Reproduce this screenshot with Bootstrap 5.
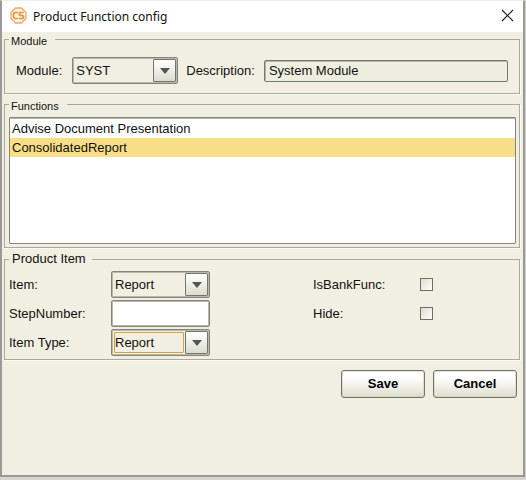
<!DOCTYPE html>
<html lang="en">
<head>
<meta charset="utf-8">
<meta name="viewport" content="width=device-width, initial-scale=1">
<title>Product Function config</title>
<link href="https://cdn.jsdelivr.net/npm/bootstrap@5.3.0/dist/css/bootstrap.min.css" rel="stylesheet">
<style>
  body { font: 13px/19px "Liberation Sans", Arial, sans-serif; color: #111; background: #d4d4d2; }
  .dialog { min-height: calc(100vh - 3px); margin-right: 1px; background: #f1efe2; border: 2px solid #999a96; border-top: 1px solid #eee; }
  .title-bar { height: 31px; background: #fff; padding: 0 9px 0 8px; font: 12px/28px "Noto Sans", sans-serif; }
  .title-bar h1 { font: inherit; margin: 0 0 0 6px; }
  .close-x { width: 13px; height: 13px; margin-bottom: 2px; }
  .close-x svg, .app-icon { display: block; }
  .app-icon { margin-bottom: 2px; }
  .panel { margin: 0 3px 3px 2px; border: 1px solid #aaa99d; box-shadow: 1px 1px 0 #fbfaf3; }
  .panel legend { float: none; width: auto; margin: 0 0 0 4px; padding: 3px 8px 0 2px; font-size: 11px; line-height: 12px; background: #f1efe2; }
  .panel .legend-large { font-size: 13px; line-height: 16px; padding: 0 6px 0 3px; }
  .module-row { padding: 10px 11px 9px 11px; }
  .module-row .combo { width: 106px; margin-left: 10px; }
  .field { height: 27px; border: 1px solid #85857a; border-radius: 2px; background: #fff; padding: 0 3px; color: #111; box-shadow: inset 0 0 0 1px #b9b8aa; }
  .field-desc { height: 22px; border-color: #77776a; background: #eeeee0; margin-left: 9px; padding-left: 4px; min-width: 0; box-shadow: inset 1px 1px 0 #b5b5a8; }
  .combo { position: relative; }
  .combo select { display: block; appearance: none; width: 100%; background: #f1efe2; }
  .combo::after { content: ""; position: absolute; top: 2px; right: 2px; bottom: 2px; width: 23px; border: 1px solid #75756b; border-radius: 1px; background: linear-gradient(#fff, #dddcd0); pointer-events: none; }
  .combo svg { position: absolute; z-index: 1; right: 8px; top: 11px; pointer-events: none; }
  .combo-focus::before { content: ""; position: absolute; top: 3px; left: 3px; right: 26px; bottom: 3px; border: 1px solid #d0a53c; border-radius: 1px; pointer-events: none; }
  .fn-list { height: 127px; margin: 5px 3px 3px 4px; border: 1px solid #85857a; background: #fff; border-radius: 1px; overflow: auto; box-shadow: inset 0 1px 0 #b9b8aa; }
  .fn-list .list-group-item { border: 0; padding: 0 2px; line-height: 19px; color: #111; background: none; }
  .fn-list .list-group-item:first-child { margin-top: 1px; }
  .fn-list .list-group-item.active { margin-top: 0; background: #f8df87; }
  .item-grid { display: grid; grid-template-columns: 102px 99px 103px 107px 1fr; gap: 2px 0; align-items: center; padding: 4px 4px 3px; }
  .item-grid .label-b { grid-column: 4; }
  .item-grid .label-a { grid-column: 1; }
  .check { appearance: none; width: 13px; height: 13px; border: 1px solid #6f6f63; background: linear-gradient(135deg, #dedcd0, #fff); margin: 0; }
  .actions { padding: 7px 6px 0 0; }
  .push { width: 84px; height: 28px; padding: 0; border: 1px solid #73736a; border-radius: 3px; background: linear-gradient(#fff 25%, #deddcf); font: bold 13px/20px "Liberation Sans", Arial, sans-serif; color: #000; box-shadow: inset 0 0 0 1px #c8c7ba80; }
</style>
<script src="https://cdn.jsdelivr.net/npm/bootstrap@5.3.0/dist/js/bootstrap.bundle.min.js"></script>
</head>
<body>
<main class="dialog">
  <header class="title-bar d-flex align-items-center">
    <svg class="app-icon flex-shrink-0" width="17" height="17" viewBox="0 0 17 17" fill="none" stroke="#eba869">
      <path d="M5.500 1h6L16 5.500v6L11.500 16h-6L1 11.500v-6z" fill="#fff3e4" stroke-width="1.300"/>
      <path d="M8 5.500H4.800L3.500 6.800v3.400L4.800 11.500H8M13.700 5.500h-3.500l-.9.900v1.300l.8.800h2.500l.9.800v1.400l-.8.800H9" stroke="#e39245" stroke-width="1.700"/>
    </svg>
    <h1 class="flex-grow-1">Product Function config</h1>
    <button type="button" class="close-x border-0 bg-transparent p-0" aria-label="Close">
      <svg width="13" height="13" viewBox="0 0 13 13" stroke="#222" stroke-width="1.200"><path d="M1 1l11 11M12 1L1 12"/></svg>
    </button>
  </header>
  <form>
    <fieldset class="panel">
      <legend>Module</legend>
      <div class="module-row d-flex align-items-center">
        <label for="module">Module:</label>
        <div class="combo flex-shrink-0">
          <select id="module" class="field"><option>SYST</option></select>
          <svg width="10" height="6" viewBox="0 0 10 6"><path d="M0 0h10L5 6z" fill="#55554f"/></svg>
        </div>
        <label for="desc" class="ms-2">Description:</label>
        <input id="desc" class="field field-desc flex-grow-1" value="System Module" readonly>
      </div>
    </fieldset>
    <fieldset class="panel">
      <legend>Functions</legend>
      <div class="fn-list list-group">
        <button type="button" class="list-group-item text-start">Advise Document Presentation</button>
        <button type="button" class="list-group-item text-start active">ConsolidatedReport</button>
      </div>
    </fieldset>
    <fieldset class="panel">
      <legend class="legend-large">Product Item</legend>
      <div class="item-grid">
        <label class="label-a" for="item">Item:</label>
        <div class="combo">
          <select id="item" class="field"><option>Report</option></select>
          <svg width="10" height="6" viewBox="0 0 10 6"><path d="M0 0h10L5 6z" fill="#55554f"/></svg>
        </div>
        <label class="label-b" for="bank">IsBankFunc:</label>
        <input class="check" id="bank" type="checkbox">
        <label class="label-a" for="step">StepNumber:</label>
        <input id="step" class="field w-100" type="text">
        <label class="label-b" for="hide">Hide:</label>
        <input class="check" id="hide" type="checkbox">
        <label class="label-a" for="type">Item Type:</label>
        <div class="combo combo-focus">
          <select id="type" class="field"><option>Report</option></select>
          <svg width="10" height="6" viewBox="0 0 10 6"><path d="M0 0h10L5 6z" fill="#55554f"/></svg>
        </div>
      </div>
    </fieldset>
    <div class="actions d-flex justify-content-end gap-2">
      <button type="submit" class="push">Save</button>
      <button type="button" class="push">Cancel</button>
    </div>
  </form>
</main>
</body>
</html>
